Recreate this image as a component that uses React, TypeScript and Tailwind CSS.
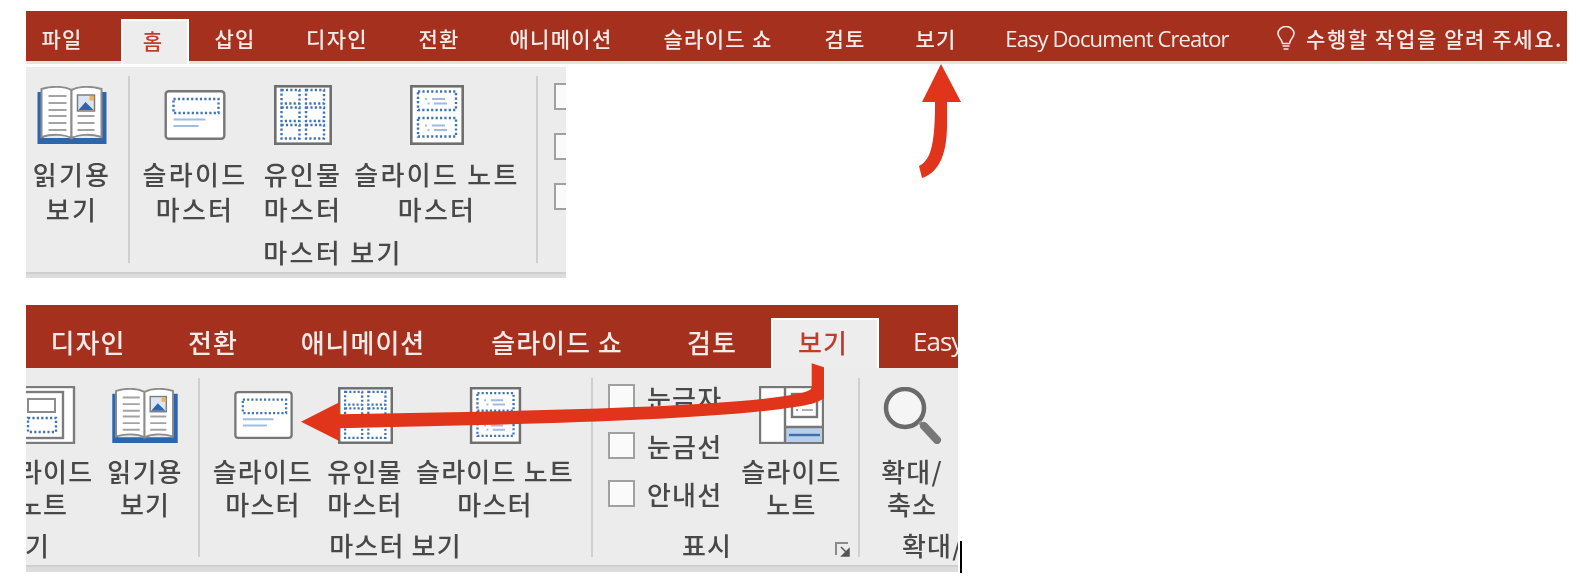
import React from "react";

const DOT = "#3f73b8";
const dots = { stroke: DOT, strokeWidth: 2.4, strokeDasharray: "2.2 2.2", fill: "none" } as const;

function BookIcon({ w, h }: { w: number; h: number }) {
  return (
    <svg width={w} height={h} viewBox="0 0 69 58">
      <path d="M0 6h6v46h58V6h5v52H0z" fill="#2f66ab" />
      <path d="M4 3C14 0 26 0 34 4v48C26 48 14 48 4 51z" fill="#fff" stroke="#8c8c8c" strokeWidth="2" />
      <path d="M64 3C54 0 42 0 34 4v48c8-4 20-4 30-1z" fill="#fff" stroke="#8c8c8c" strokeWidth="2" />
      <path d="M11 10h18M11 17h18M11 24h18M11 30h18M11 37h18M11 44h18M40 30h17M40 37h17M40 44h17" stroke="#a3a3a3" strokeWidth="2" />
      <rect x="40" y="9" width="17" height="16" fill="#dce6f2" stroke="#7d7d7d" strokeWidth="1.5" />
      <path d="M41 24l7-8 8 8z" fill="#2f66ab" />
      <rect x="52" y="10" width="4.5" height="4.5" fill="#f0b050" />
    </svg>
  );
}

function SlideMasterIcon({ w, h }: { w: number; h: number }) {
  return (
    <svg width={w} height={h} viewBox="0 0 61 50">
      <rect x="1.2" y="1.2" width="58.6" height="47.6" rx="3" fill="#fff" stroke="#777" strokeWidth="2.4" />
      <rect x="9" y="9" width="45" height="14" {...dots} />
      <path d="M9 29.5h32M9 36h25" stroke="#a0bce0" strokeWidth="2" />
    </svg>
  );
}

function HandoutIcon({ w, h }: { w: number; h: number }) {
  const rs = [
    [7.5, 5], [32, 5], [7.5, 22.5], [32, 22.5], [7.5, 40], [32, 40],
  ];
  return (
    <svg width={w} height={h} viewBox="0 0 58 60">
      <rect x="1.3" y="1.3" width="55.4" height="57.4" fill="#fff" stroke="#6f6f6f" strokeWidth="2.6" />
      {rs.map(([x, y]) => (
        <rect key={`${x}-${y}`} x={x} y={y} width="18" height="13.5" {...dots} />
      ))}
    </svg>
  );
}

function NotesIcon({ w, h }: { w: number; h: number }) {
  return (
    <svg width={w} height={h} viewBox="0 0 54 60">
      <rect x="1.3" y="1.3" width="51.4" height="57.4" fill="#fff" stroke="#6f6f6f" strokeWidth="2.6" />
      {[6.5, 33].map((y) => (
        <g key={y}>
          <rect x="8" y={y} width="38" height="18.5" {...dots} />
          <path d={`M22 ${y + 7.5}h13M24 ${y + 12}h13`} stroke="#9fbce0" strokeWidth="2.2" />
          <path d={`M15 ${y + 7.5}h2M17.5 ${y + 12}h2`} stroke="#9fbce0" strokeWidth="2.2" />
        </g>
      ))}
    </svg>
  );
}

function SorterIcon() {
  return (
    <svg width="100" height="58" viewBox="0 0 100 58">
      <rect x="-10" y="1" width="91" height="56" fill="#fff" stroke="#7c7c7c" strokeWidth="2.4" />
      <rect x="-4" y="6" width="74" height="46" fill="#fff" stroke="#7c7c7c" strokeWidth="2.4" />
      <rect x="35" y="13" width="27" height="13" fill="#fff" stroke="#8c8c8c" strokeWidth="2" />
      <rect x="35" y="32" width="28" height="14" {...dots} />
    </svg>
  );
}

function SlideNoteIcon() {
  return (
    <svg width="65" height="58" viewBox="0 0 65 58">
      <rect x="1" y="1" width="63" height="56" fill="#fff" stroke="#777" strokeWidth="2.4" />
      <rect x="27" y="41" width="36" height="15" fill="#b7cfe8" />
      <path d="M26 1v56M26 41h38" stroke="#777" strokeWidth="2.4" />
      <path d="M30 49h31" stroke="#3f6fb0" strokeWidth="2.4" />
      <rect x="33" y="8" width="25" height="23" fill="#fff" stroke="#777" strokeWidth="2.4" />
      <path d="M43 24h11" stroke="#b0b0b0" strokeWidth="2" />
      <path d="M37 24h2" stroke="#9a9a9a" strokeWidth="2" />
    </svg>
  );
}

function MagnifierIcon() {
  return (
    <svg width="59" height="57" viewBox="0 0 59 57">
      <circle cx="22" cy="21" r="19" fill="#f5f5f5" stroke="#6a6a6a" strokeWidth="4.5" />
      <path d="M36 35l4 3" stroke="#8a8a8a" strokeWidth="3.5" />
      <path d="M41 39l13 14" stroke="#777" strokeWidth="8" strokeLinecap="round" />
    </svg>
  );
}

function LauncherIcon() {
  return (
    <svg width="15" height="15" viewBox="0 0 15 15">
      <path d="M1 13V1h12" fill="none" stroke="#8a8a8a" strokeWidth="2" />
      <path d="M6 5l7 7M14 7v7H7z" stroke="#555" strokeWidth="1.5" fill="#555" />
    </svg>
  );
}

function BulbIcon() {
  return (
    <svg width="18" height="25" viewBox="0 0 18 25" fill="none" stroke="#f5e8e4" strokeWidth="1.6">
      <path d="M5.5 17.5C5 13 1 11.5 1 7.5a8 7 0 0 1 16 0c0 4-4 5.5-4.5 10z" />
      <path d="M5.5 20h7M6.5 23h5" />
    </svg>
  );
}

function Tab({ label, className }: { label: string; className: string }) {
  return <div className={`shrink-0 text-center whitespace-nowrap ${className}`}>{label}</div>;
}

function Check() {
  return <div className="w-[27px] h-[27px] shrink-0 border-2 border-[#a0a0a0] bg-[#fafafa]" />;
}

function Sep({ h }: { h: string }) {
  return <div className={`w-[2px] shrink-0 bg-[#cfcfcf] ${h}`} />;
}

function RibbonBtn({
  width,
  areaH,
  lineH,
  icon,
  lines,
}: {
  width: string;
  areaH: string;
  lineH: string;
  icon: React.ReactNode;
  lines: string[];
}) {
  return (
    <div className={`shrink-0 flex flex-col items-center ${width}`}>
      <div className={`flex items-center justify-center mt-[8px] ${areaH}`}>{icon}</div>
      <div className={`mt-[10px] text-center whitespace-nowrap ${lineH}`}>
        {lines.map((l) => (
          <div key={l}>{l}</div>
        ))}
      </div>
    </div>
  );
}

function TopRibbon() {
  const a = "h-[62px]";
  const l = "leading-[35px]";
  return (
    <div className="mt-[3px] w-[540px] h-[211px] bg-[#ececec] flex flex-col overflow-hidden text-[26px] tracking-[2.3px] font-medium text-[#484848]">
      <div className="flex items-start pt-[9px] h-[205px]">
        <div className="mr-[10px]">
          <RibbonBtn width="w-[92px]" areaH={a} lineH={l} icon={<BookIcon w={70} h={58} />} lines={["읽기용", "보기"]} />
        </div>
        <Sep h="h-[187px]" />
        <div className="flex flex-col shrink-0 w-[406px]">
          <div className="flex">
            <RibbonBtn width="w-[130px]" areaH={a} lineH={l} icon={<SlideMasterIcon w={62} h={50} />} lines={["슬라이드", "마스터"]} />
            <RibbonBtn width="w-[86px]" areaH={a} lineH={l} icon={<HandoutIcon w={58} h={60} />} lines={["유인물", "마스터"]} />
            <RibbonBtn width="w-[182px]" areaH={a} lineH={l} icon={<NotesIcon w={56} h={60} />} lines={["슬라이드 노트", "마스터"]} />
          </div>
          <div className="mt-[13px] text-center leading-[26px]">마스터 보기</div>
        </div>
        <Sep h="h-[187px]" />
        <div className="flex flex-col gap-[23px] pl-[16px] pt-[7px]">
          <Check />
          <Check />
          <Check />
        </div>
      </div>
      <div className="h-[6px] bg-[#dcdcdc] border-t-2 border-[#cfcfcf]" />
    </div>
  );
}

function BottomRibbon() {
  const a = "h-[58px]";
  const l = "leading-[33px]";
  return (
    <div className="w-[932px] h-[204px] bg-[#ececec] flex flex-col overflow-hidden text-[26px] tracking-[1.2px] font-medium text-[#484848]">
      <div className="flex items-start pt-[10px] h-[197px]">
        <div className="flex flex-col shrink-0 ml-[-33px]">
          <div className="flex">
            <RibbonBtn width="w-[100px]" areaH={a} lineH={l} icon={<SorterIcon />} lines={["슬라이드", "노트"]} />
            <div className="ml-[2px]">
              <RibbonBtn width="w-[100px]" areaH={a} lineH={l} icon={<BookIcon w={66} h={55} />} lines={["읽기용", "보기"]} />
            </div>
            <div className="w-[3px]" />
          </div>
          <div className="mt-[12px] leading-[26px] pl-[7px]">보기</div>
        </div>
        <Sep h="h-[179px]" />
        <div className="flex flex-col shrink-0 w-[391px]">
          <div className="flex">
            <RibbonBtn width="w-[126px]" areaH={a} lineH={l} icon={<SlideMasterIcon w={59} h={48} />} lines={["슬라이드", "마스터"]} />
            <RibbonBtn width="w-[78px]" areaH={a} lineH={l} icon={<HandoutIcon w={55} h={57} />} lines={["유인물", "마스터"]} />
            <RibbonBtn width="w-[182px]" areaH={a} lineH={l} icon={<NotesIcon w={53} h={57} />} lines={["슬라이드 노트", "마스터"]} />
          </div>
          <div className="mt-[12px] text-center leading-[26px]">마스터 보기</div>
        </div>
        <Sep h="h-[179px]" />
        <div className="flex flex-col shrink-0 w-[265px]">
          <div className="flex">
            <div className="w-[132px] shrink-0 pl-[15px] pt-[6px] flex flex-col gap-[21px]">
              {["눈금자", "눈금선", "안내선"].map((t) => (
                <div key={t} className="flex items-center gap-[12px] h-[27px] whitespace-nowrap">
                  <Check />
                  <span>{t}</span>
                </div>
              ))}
            </div>
            <RibbonBtn width="w-[133px]" areaH={a} lineH={l} icon={<SlideNoteIcon />} lines={["슬라이드", "노트"]} />
          </div>
          <div className="mt-[12px] flex items-end">
            <div className="w-[228px] text-center leading-[26px]">표시</div>
            <div className="ml-[14px] mb-[1px] flex">
              <LauncherIcon />
            </div>
          </div>
        </div>
        <Sep h="h-[179px]" />
        <div className="flex flex-col shrink-0 w-[104px]">
          <RibbonBtn width="w-[104px]" areaH={a} lineH={l} icon={<MagnifierIcon />} lines={["확대/", "축소"]} />
          <div className="mt-[12px] leading-[26px] pl-[42px] whitespace-nowrap">확대/축소</div>
        </div>
      </div>
      <div className="h-[7px] bg-[#dcdcdc] border-t-2 border-[#cfcfcf]" />
    </div>
  );
}

export default function App() {
  return (
    <div className="relative w-[1582px] h-[578px] overflow-hidden bg-white font-['Noto_Sans_CJK_KR','Noto_Sans',sans-serif]">
      <div className="pl-[26px] pt-[11px] blur-[0.7px]">
        {/* top window */}
        <div className="w-[1541px] h-[53px] border-b-[3px] border-[#e4e4e4]">
          <div className="h-[50px] bg-[#a4301d] flex items-start text-[21px] tracking-[1.3px] font-medium text-[#f7ece9]">
            <div className="h-[50px] flex items-center pt-[6px]">
              <Tab label="파일" className="w-[72px] mr-[23px]" />
            </div>
            <div className="h-[45px] mt-[8px] w-[68px] pr-[4px] bg-[#ededed] border-x-2 border-t-2 border-white text-[#c23c2a] text-center leading-[38px]">홈</div>
            <div className="h-[50px] flex items-center pt-[5px]">
              <Tab label="삽입" className="w-[92px]" />
              <Tab label="디자인" className="w-[112px]" />
              <Tab label="전환" className="w-[92px]" />
              <Tab label="애니메이션" className="w-[152px]" />
              <Tab label="슬라이드 쇼" className="w-[162px]" />
              <Tab label="검토" className="w-[92px]" />
              <Tab label="보기" className="w-[90px]" />
              <Tab label="Easy Document Creator" className="w-[272px] tracking-[-0.9px] font-normal font-['Open_Sans',sans-serif] text-[22px]" />
              <div className="ml-[24px] mr-[11px] flex">
                <BulbIcon />
              </div>
              <span className="whitespace-nowrap text-[21px] tracking-[1.6px]">수행할 작업을 알려 주세요.</span>
            </div>
          </div>
        </div>
        <TopRibbon />

        {/* bottom window */}
        <div className="mt-[27px] w-[932px] h-[63px] bg-[#a4301d] flex items-end overflow-hidden text-[26px] tracking-[1px] font-medium text-[#f7ece9]">
          <div className="h-[63px] flex items-center pt-[10px]">
            <Tab label="디자인" className="w-[124px]" />
            <Tab label="전환" className="w-[126px]" />
            <Tab label="애니메이션" className="w-[174px]" />
            <Tab label="슬라이드 쇼" className="w-[214px]" />
            <Tab label="검토" className="w-[96px] mr-[11px]" />
          </div>
          <div className="h-[50px] w-[108px] shrink-0 pr-[4px] bg-[#ededed] border-x-2 border-t-2 border-white text-[#c23c2a] text-center leading-[44px]">보기</div>
          <div className="h-[63px] flex items-center pt-[10px] pl-[34px] whitespace-nowrap font-normal font-['Open_Sans',sans-serif] tracking-[-1px]">Easy Document Creator</div>
        </div>
        <BottomRibbon />
      </div>

      {/* text cursor over the picture */}
      <div className="absolute left-[960px] top-[541px] w-[2px] h-[32px] bg-black" />

      {/* annotation arrows */}
      <svg className="absolute left-0 top-0 pointer-events-none" width="1582" height="578" viewBox="0 0 1582 578">
        <path
          d="M941 64L961 102H947V125C947 150 941 172 922 178L919 166C932 160 935 140 935 102H922Z"
          fill="#e0351b"
        />
        <path
          d="M301 421.7L339.3 402.3V414.3L480 411.7C600 409 730 405 785 396C803 393 811.7 391 811.7 387V363.3L824 367.3V398C818 403 808 405 795 407C730 417 600 422 480 425L339.3 428.3V441Z"
          fill="#e0351b"
        />
      </svg>
    </div>
  );
}
